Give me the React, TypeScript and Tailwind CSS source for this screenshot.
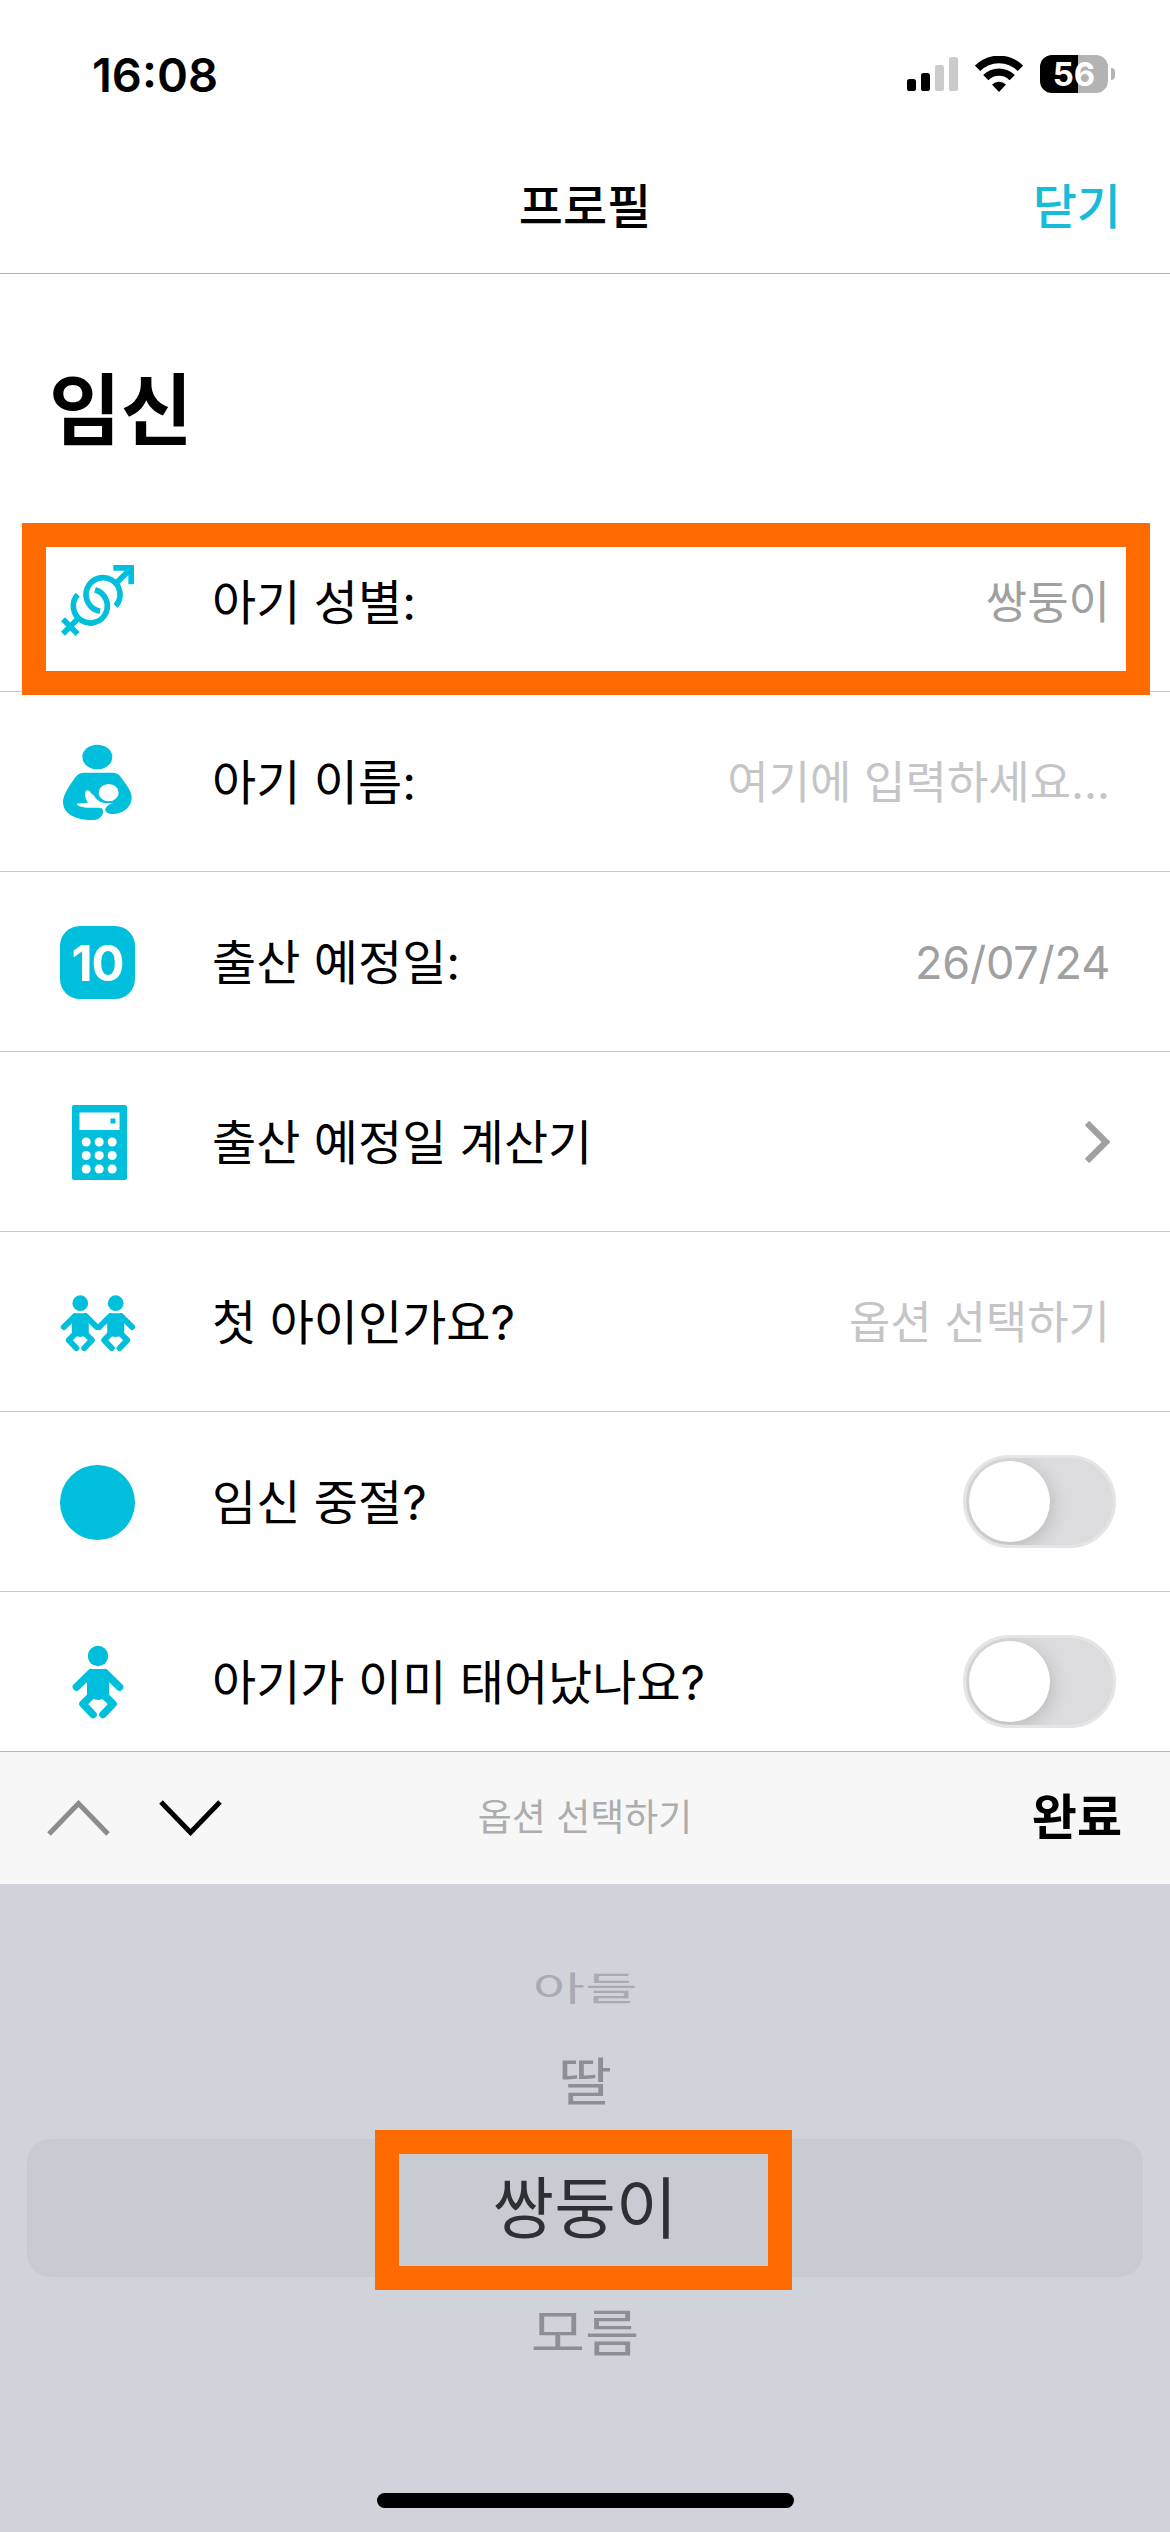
import type { ReactNode } from "react";

const TEAL = "#00bfdd";

function SignalIcon() {
  return (
    <svg className="block h-[34px] w-[51px]" viewBox="0 0 51 34">
      <rect x="0" y="22" width="9" height="12" rx="2.6" fill="#000" />
      <rect x="14" y="16" width="9" height="18" rx="2.6" fill="#000" />
      <rect x="28" y="8" width="9" height="26" rx="2.6" fill="#cbcbcb" />
      <rect x="42" y="0" width="9" height="34" rx="2.6" fill="#cbcbcb" />
    </svg>
  );
}

function WifiIcon() {
  return (
    <svg className="block h-[36px] w-[48px]" viewBox="0 0 48 36">
      <path d="M2.600 12.800a30 30 0 0 1 42.800 0" fill="none" stroke="#000" strokeWidth="7.600" transform="translate(0 -.4)" />
      <path d="M10.800 21.600a18.600 18.600 0 0 1 26.400 0" fill="none" stroke="#000" strokeWidth="7.400" />
      <path d="M17 28.600a10 10 0 0 1 14 0L24 36Z" fill="#000" />
    </svg>
  );
}

function Battery() {
  return (
    <div className="flex items-center gap-[3px]">
      <div className="flex h-[38px] w-[68px] items-center justify-center rounded-[12px] bg-[linear-gradient(90deg,#000_56%,#b3b3b3_56%)] text-[33px] leading-[38px] font-bold text-white">
        56
      </div>
      <div className="h-[12px] w-[4px] rounded-r-full bg-[#b3b3b3]" />
    </div>
  );
}

function GenderIcon() {
  return (
    <svg className="block size-[76px]" viewBox="58 80 228 228" fill="none" stroke={TEAL} strokeWidth="17">
      <path d="M225 209A51 51 0 1 0 178 225" transform="translate(0 -3)" />
      <path d="M163 157A51 51 0 1 1 111 172" />
      <path d="M221 143L270 94M218 91.500H271.500V141M117 239L67 289M67 246L111 290" />
    </svg>
  );
}

function NursingIcon() {
  return (
    <svg className="ml-[5px] block h-[95px] w-[100px]" viewBox="0 0 300 285" fill={TEAL}>
      <ellipse cx="142" cy="66" rx="45" ry="37" />
      <path d="M105 113H185C200 113 207 118 214 128C232 152 245 170 245 188C245 216 218 237 188 237C172 237 163 230 166 219L158 222C163 238 152 254 130 255C80 256 39 238 39 200C39 180 60 150 76 127C84 116 92 113 105 113Z" />
      <g fill="#fff">
        <ellipse cx="176" cy="173" rx="30" ry="26" />
        <path d="M105 174C107 164 117 163 122 173L133 183C142 201 164 209 190 203C178 207 168 213 166 221L160 231C162 221 154 218 142 218C112 220 88 216 81 209C78 204 92 205 114 203C108 195 104 184 105 174Z" />
      </g>
    </svg>
  );
}

function BabyShape() {
  return (
    <g fill={TEAL} stroke="none">
      <circle cx="0" cy="-26" r="10.200" />
      <path d="M-8-13H8L11-9V16L0 18L-11 16V-9Z" />
      <path
        d="M-7-9.200L-21.500 5M7-9.200L21.500 5M-5 12L-15 22L-5 32.500M5 12L15 22L5 32.500"
        fill="none"
        stroke={TEAL}
        strokeWidth="7.600"
        strokeLinecap="round"
        strokeLinejoin="round"
      />
    </g>
  );
}

function BabyIcon() {
  return (
    <svg className="block size-[76px]" viewBox="-38 -38 76 76">
      <BabyShape />
    </svg>
  );
}

function TwinsIcon() {
  return (
    <svg className="block size-[76px]" viewBox="-38 -38 76 76">
      <g transform="translate(-17.700 1.200) scale(.77)">
        <BabyShape />
      </g>
      <g transform="translate(17.700 1.200) scale(.77)">
        <BabyShape />
      </g>
    </svg>
  );
}

function CalculatorIcon() {
  return (
    <svg className="ml-[3px] block h-[75px] w-[55px]" viewBox="0 0 55 75">
      <rect width="55" height="75" rx="2" fill={TEAL} />
      <rect x="7.500" y="7.500" width="40" height="17.500" fill="#fff" />
      <rect x="38.500" y="13.500" width="5" height="5" fill={TEAL} />
      {[37, 50.5, 64].map((y) =>
        [14.2, 27.2, 40.2].map((x) => <circle key={`${x}-${y}`} cx={x} cy={y} r="4.500" fill="#fff" />),
      )}
    </svg>
  );
}

function CalendarIcon() {
  return (
    <div className="flex h-[73px] w-[75px] items-center justify-center rounded-[20px] bg-[#00bfdd] pt-[2px] text-[49px] leading-none font-bold tracking-[-1px] text-white">
      10
    </div>
  );
}

function Toggle() {
  return (
    <div className="mr-[54px] mb-[2px] h-[93px] w-[153px] overflow-hidden rounded-full border-[3px] border-[#e5e5e6] bg-[#dcdcde] p-[3px]">
      <div className="size-[81px] rounded-full bg-white shadow-[2px_4px_18px_rgba(0,0,0,0.16)]" />
    </div>
  );
}

function Row({ icon, label, children }: { icon: ReactNode; label: string; children: ReactNode }) {
  return (
    <div className="flex h-[180px] shrink-0 items-center border-b border-[#c8c8ca] pt-px">
      <div className="flex w-[195px] shrink-0 items-center justify-center">{icon}</div>
      <div className="ml-[17px] flex-1 pt-[2px] text-[48px] leading-[60px] text-black">{label}</div>
      {children}
    </div>
  );
}

function Value({ children, faint = false }: { children: ReactNode; faint?: boolean }) {
  return (
    <div className={faint ? "mr-[60px] pt-px text-[45px] leading-[60px] text-[#c5c5c7]" : "mr-[60px] pt-px text-[45px] leading-[60px] text-[#a0a0a0]"}>
      {children}
    </div>
  );
}

export default function App() {
  return (
    <div className="relative flex h-[2532px] w-[1170px] flex-col overflow-hidden bg-white font-['Inter','Noto_Sans_CJK_KR',sans-serif] whitespace-nowrap">
      <div className="flex h-[148px] shrink-0 items-center justify-between pr-[55px] pl-[92px]">
        <div className="text-[47px] leading-none font-semibold">16:08</div>
        <div className="flex items-center gap-[17px]">
          <SignalIcon />
          <WifiIcon />
          <Battery />
        </div>
      </div>

      <div className="grid h-[126px] shrink-0 grid-cols-3 items-center border-b border-[#b0b0b0] pb-[8px]">
        <div />
        <div className="text-center text-[48px] leading-[60px] font-medium">프로필</div>
        <div className="pr-[49px] text-right text-[48px] leading-[60px] font-medium text-[#16bcd8]">닫기</div>
      </div>

      <div className="flex h-[238px] shrink-0 items-center pt-[35px] pl-[49px] text-[78px] leading-[90px] font-bold">임신</div>

      <div className="flex h-[1239px] shrink-0 flex-col overflow-hidden">
        <Row icon={<GenderIcon />} label="아기 성별:">
          <Value>쌍둥이</Value>
        </Row>
        <Row icon={<NursingIcon />} label="아기 이름:">
          <Value faint>여기에 입력하세요...</Value>
        </Row>
        <Row icon={<CalendarIcon />} label="출산 예정일:">
          <Value>
            <span className="tracking-[-0.2px]">26/07/24</span>
          </Value>
        </Row>
        <Row icon={<CalculatorIcon />} label="출산 예정일 계산기">
          <svg className="mr-[60px] block h-[42px] w-[25px]" viewBox="0 0 25 42">
            <path d="M2 2L21 21L2 40" fill="none" stroke="#a0a0a0" strokeWidth="6.200" />
          </svg>
        </Row>
        <Row icon={<TwinsIcon />} label="첫 아이인가요?">
          <Value faint>옵션 선택하기</Value>
        </Row>
        <Row icon={<div className="size-[75px] rounded-full bg-[#00bfdd]" />} label="임신 중절?">
          <Toggle />
        </Row>
        <Row icon={<BabyIcon />} label="아기가 이미 태어났나요?">
          <Toggle />
        </Row>
      </div>

      <div className="grid h-[133px] shrink-0 grid-cols-3 items-center border-t border-[#b2b3b5] bg-[#f7f7f7]">
        <div className="flex gap-[49px] pl-[47px]">
          <svg className="block h-[36px] w-[63px]" viewBox="0 0 63 36">
            <path d="M2 34L31.500 3.500L61 34" fill="none" stroke="#8c8c8c" strokeWidth="5" />
          </svg>
          <svg className="block h-[36px] w-[63px]" viewBox="0 0 63 36">
            <path d="M2 2L31.500 32.500L61 2" fill="none" stroke="#000" strokeWidth="5" />
          </svg>
        </div>
        <div className="text-center text-[37px] leading-[50px] text-[#adadad]">옵션 선택하기</div>
        <div className="pr-[48px] text-right text-[49px] leading-[60px] font-bold">완료</div>
      </div>

      <div className="flex flex-1 flex-col items-center bg-[#d0d3da] px-[27px] pt-[68px]">
        <div className="flex h-[72px] scale-y-[0.6] items-center text-[57px] leading-none text-[#a9abb1]">아들</div>
        <div className="flex h-[115px] scale-y-[0.88] items-center pt-[2px] text-[59px] leading-none text-[#8d8f94]">딸</div>
        <div className="flex h-[138px] w-full items-center justify-center rounded-[24px] bg-[#c9cbd2] text-[67px] leading-none text-[#2f3033]">
          쌍둥이
        </div>
        <div className="flex h-[112px] scale-y-[0.86] items-center text-[59px] leading-none text-[#8d8f94]">모름</div>
        <div className="mt-auto mb-[24px] h-[15px] w-[417px] rounded-full bg-black" />
      </div>

      <div className="absolute top-[523px] left-[22px] h-[172px] w-[1128px] border-[24.5px] border-[#ff6b00]" />
      <div className="absolute top-[2130px] left-[375px] h-[160px] w-[417px] border-[24.5px] border-[#ff6b00]" />
    </div>
  );
}
